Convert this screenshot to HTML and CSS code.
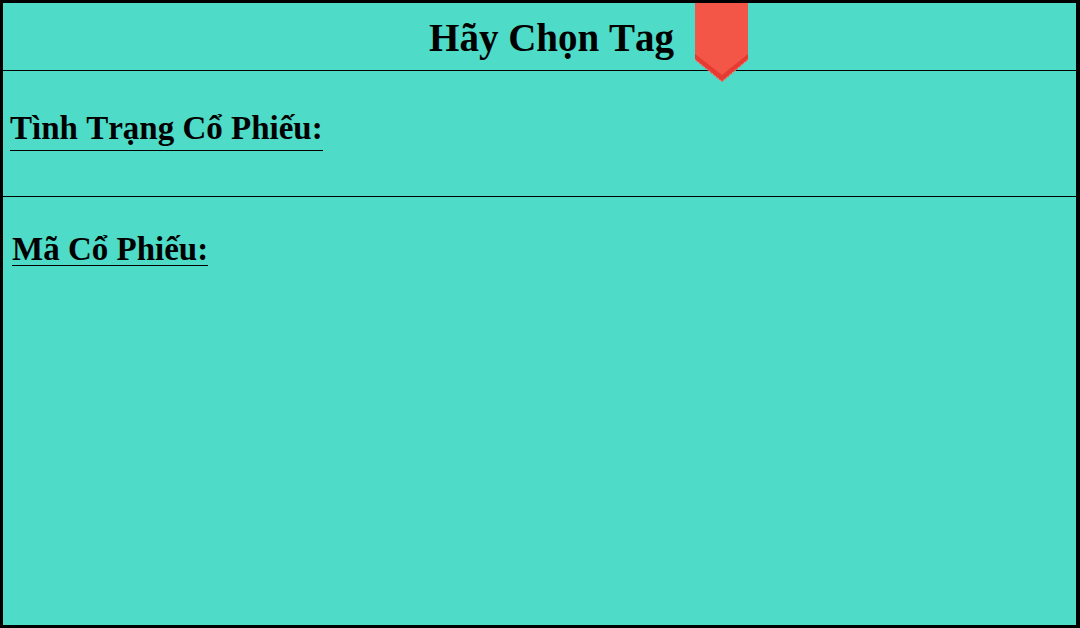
FILE: index.html
```html
<!DOCTYPE html>
<html lang="vi">
<head>
<meta charset="utf-8">
<meta name="viewport" content="width=device-width, initial-scale=1">
<title>Hãy Chọn Tag</title>
<link rel="stylesheet" href="styles.css">
</head>
<body>
<main class="panel">
  <header class="header">
    <h1 class="title">Hãy Chọn Tag</h1>
    <div class="ribbon-slot">
      <svg class="ribbon" width="53" height="79" viewBox="0 0 53 79" aria-hidden="true">
        <path d="M0 50H53V57L27 79L0 57Z" fill="#e63b32"/>
        <path d="M0 56.5L27 78.5L53 56.5" fill="none" stroke="#f5b5a8" stroke-width="1" stroke-dasharray="1 1"/>
        <path d="M0 0H53V51L27 72L0 51Z" fill="#f35547"/>
      </svg>
    </div>
  </header>
  <section class="status">
    <h2 class="label label-status">Tình Trạng Cổ Phiếu:</h2>
  </section>
  <section class="codes">
    <h2 class="label label-code">Mã Cổ Phiếu:</h2>
  </section>
</main>
</body>
</html>
```
FILE: styles.css
```css
* {
  box-sizing: border-box;
}

body {
  margin: 0;
  font-family: "Liberation Serif", "Times New Roman", serif;
  font-kerning: none;
  color: #000;
}

.panel {
  display: flex;
  flex-direction: column;
  min-height: 100vh;
  border: 3px solid #000;
  border-right-width: 4px;
  background: #4edbc7;
}

.header {
  display: flex;
  justify-content: center;
  align-items: flex-start;
  gap: 21px;
  padding-left: 98px;
  border-bottom: 1px solid #000;
}

.title {
  margin: 0;
  padding: 11px 0 8px;
  font-size: 39px;
  line-height: 48px;
}

.ribbon-slot {
  position: relative;
  width: 53px;
}

.ribbon {
  position: absolute;
  top: 0;
  left: 0;
}

.status {
  padding: 41px 7px 45px;
  border-bottom: 1px solid #000;
}

.codes {
  flex: 1;
  padding: 36px 9px;
}

.label {
  width: fit-content;
  margin: 0;
  font-size: 33px;
  line-height: 32px;
  border-bottom: 1px solid #000;
}

.label-status {
  padding-bottom: 6px;
}
```
